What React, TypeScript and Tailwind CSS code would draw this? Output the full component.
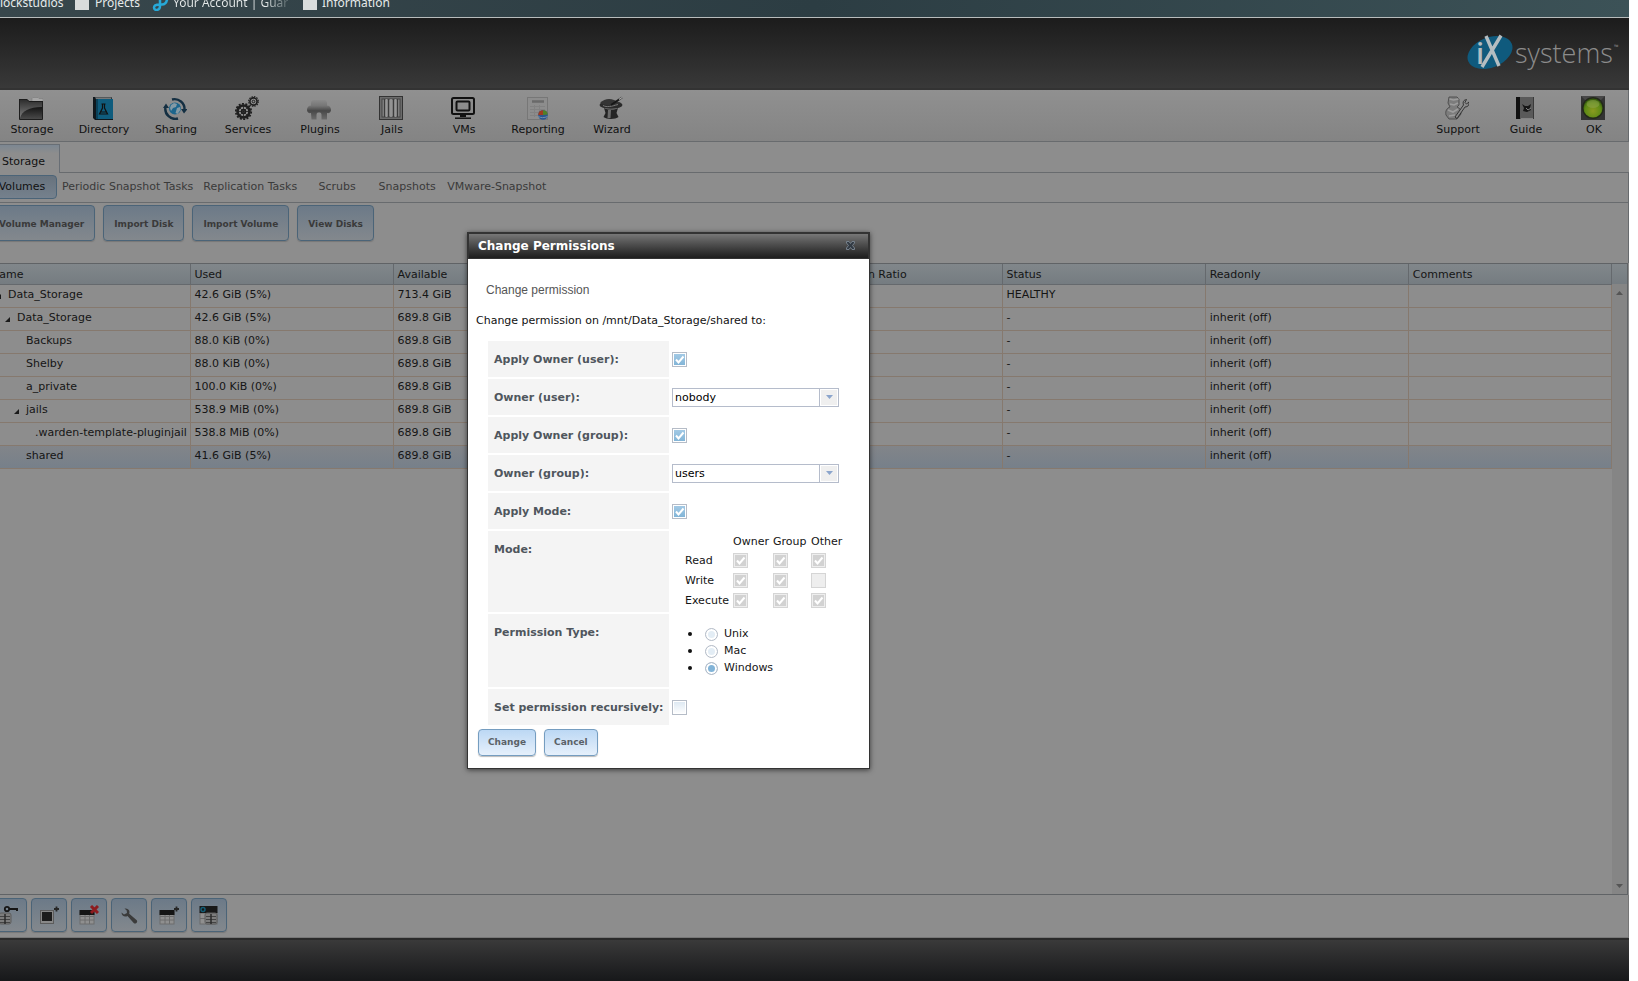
import React from "react";
import clsx from "clsx";

interface Volume {
    name: string;
    depth: number;
    open?: boolean;
    used: string;
    available: string;
    status: string;
    readonly: string;
}

const volumes: Volume[] = [
    { name: "Data_Storage", depth: 0, open: true, used: "42.6 GiB (5%)", available: "713.4 GiB", status: "HEALTHY", readonly: "" },
    { name: "Data_Storage", depth: 1, open: true, used: "42.6 GiB (5%)", available: "689.8 GiB", status: "-", readonly: "inherit (off)" },
    { name: "Backups", depth: 2, used: "88.0 KiB (0%)", available: "689.8 GiB", status: "-", readonly: "inherit (off)" },
    { name: "Shelby", depth: 2, used: "88.0 KiB (0%)", available: "689.8 GiB", status: "-", readonly: "inherit (off)" },
    { name: "a_private", depth: 2, used: "100.0 KiB (0%)", available: "689.8 GiB", status: "-", readonly: "inherit (off)" },
    { name: "jails", depth: 2, open: true, used: "538.9 MiB (0%)", available: "689.8 GiB", status: "-", readonly: "inherit (off)" },
    { name: ".warden-template-pluginjail", depth: 3, used: "538.8 MiB (0%)", available: "689.8 GiB", status: "-", readonly: "inherit (off)" },
    { name: "shared", depth: 2, used: "41.6 GiB (5%)", available: "689.8 GiB", status: "-", readonly: "inherit (off)" },
];

const indents = ["pl-[13px]", "pl-[22px]", "pl-[31px]", "pl-10"];

function StorageIcon() {
    return (
        <svg width="24" height="24" viewBox="0 0 24 24">
            <defs>
                <linearGradient id="folder" x1="0" y1="0" x2="0" y2="1">
                    <stop offset="0" stopColor="#2a2a2a" />
                    <stop offset="1" stopColor="#868686" />
                </linearGradient>
                <linearGradient id="flap" x1="0" y1="0" x2="0" y2="1">
                    <stop offset="0" stopColor="#151515" />
                    <stop offset="1" stopColor="#4a4a4a" />
                </linearGradient>
            </defs>
            <path d="M13 5V2.500l1-1h5l1 1h4V8H13z" fill="#a5a5a5" stroke="#7c7c7c" strokeWidth=".6" />
            <path d="M0 3h8l2 2h14v19H0z" fill="url(#folder)" />
            <path d="M1 22C3 15 10 11 23 11v12H1z" fill="url(#flap)" />
            <path d="M0 3.500h8l2 2h14" fill="none" stroke="#1c1c1c" />
            <path d="M.5 4v19.500h23V6" fill="none" stroke="#1e1e1e" />
        </svg>
    );
}

function DirectoryIcon() {
    return (
        <svg width="24" height="24" viewBox="0 0 24 24">
            <path d="M2 1h19v2H5v19h17v2H4L2 22z" fill="#10181d" />
            <path d="M4 1.500h17l-1 1.200H5z" fill="#999" />
            <rect x="5" y="3" width="17" height="20" fill="#0f5c7d" />
            <rect x="5" y="3" width="2" height="20" fill="#0a4159" />
            <path d="M10.500 8h4M11.500 8v4L8.500 18h8L13.500 12V8M10 16h5" fill="none" stroke="#101010" strokeWidth="1.200" />
        </svg>
    );
}

function SharingIcon() {
    return (
        <svg width="24" height="24" viewBox="0 0 24 24">
            <g fill="none" stroke="#142f42" strokeWidth="2.400">
                <path d="M9 3.500A10 10 0 0 1 21.500 14" />
                <path d="M15 22.500A10 10 0 0 1 2.500 11" />
            </g>
            <path d="M18 13h6.500l-3.500 4.500zM0 12l3-4.500L6 12z" fill="#142f42" />
            <circle cx="12" cy="12.500" r="6" fill="#1c658c" />
            <path d="M8 9l3-2 3 1-1 3-3 1-2 3-1-3zM14 12l3-1 .5 3-3 4-2-1z" fill="#849aa5" />
        </svg>
    );
}

function GearsIcon() {
    return (
        <svg width="24" height="24" viewBox="0 0 24 24">
            <g fill="none" stroke="#1f1f1f">
                <circle cx="8.500" cy="15.500" r="6" strokeWidth="2.600" />
                <circle cx="8.500" cy="15.500" r="7.700" strokeWidth="1.800" strokeDasharray="2 1.450" />
                <circle cx="8.500" cy="15.500" r="2" strokeWidth="1.400" />
                <path d="M8.500 10v11M3 15.500h11M4.700 11.700l7.600 7.600M12.300 11.700l-7.600 7.600" strokeWidth=".8" />
                <circle cx="18.500" cy="5.500" r="3.600" strokeWidth="1.600" />
                <circle cx="18.500" cy="5.500" r="4.800" strokeWidth="1.200" strokeDasharray="1.500 1" />
                <circle cx="18.500" cy="5.500" r="1.300" strokeWidth="1" />
            </g>
        </svg>
    );
}

function PluginIcon() {
    return (
        <svg width="24" height="24" viewBox="0 0 24 24">
            <defs>
                <linearGradient id="plug" x1="0" y1="0" x2="0" y2="1">
                    <stop offset="0" stopColor="#8a8a8a" />
                    <stop offset=".3" stopColor="#767676" />
                    <stop offset=".55" stopColor="#484848" />
                    <stop offset="1" stopColor="#6b6b6b" />
                </linearGradient>
            </defs>
            <path
                d="M7 4h10c2.500 0 3.500 2 3 5.500 2.500 0 4 2 4 4.500s-2 3.500-4 3L20 23.500h-5.500V19c0-2-1-2.500-2.500-2.500S9.500 17 9.500 19v4.500H4.500L4 17c-2 .5-4-.5-4-3s1.500-4.500 4-4.500C3.500 6 4.500 4 7 4z"
                fill="url(#plug)"
            />
        </svg>
    );
}

function JailsIcon() {
    return (
        <svg width="24" height="24" viewBox="0 0 24 24">
            <rect x=".5" y=".5" width="23" height="23" fill="#6b6b6b" stroke="#333" />
            <rect x="3" y="3" width="18" height="18" fill="#858585" stroke="#444" />
            <path d="M5.500 3v18M9.500 3v18M14.500 3v18M18.500 3v18" stroke="#3c3c3c" strokeWidth="1.200" />
            <path d="M7.500 3v18M12 3v18M16.500 3v18" stroke="#979797" strokeWidth="1.600" />
        </svg>
    );
}

function VmIcon() {
    return (
        <svg width="24" height="24" viewBox="0 0 24 24" fill="none" stroke="#111">
            <rect x="1" y="2" width="22" height="16" rx="1.500" strokeWidth="2" />
            <rect x="5.500" y="5.500" width="13" height="9" rx="1" strokeWidth="2" />
            <path d="M9 20h6" strokeWidth="2" />
            <path d="M4 22.200h16" strokeWidth="1.500" />
        </svg>
    );
}

function ReportIcon() {
    return (
        <svg width="24" height="24" viewBox="0 0 24 24">
            <rect x="2.500" y="1.500" width="20" height="22" fill="#8d8d8d" stroke="#777" />
            <path d="M7 5.500h12" stroke="#6a6a6a" strokeWidth="2.500" />
            <path d="M5 10.500h15M5 13.500h15M5 16.500h15M5 19.500h15M9.500 9v12M14.500 9v12" stroke="#828282" />
            <circle cx="18" cy="19" r="4.800" fill="#2c568d" />
            <path d="M18 19v-4.800A4.800 4.800 0 0 0 13.200 19z" fill="#a03a20" />
            <path d="M18 19v-4.800a4.800 4.800 0 0 1 4.800 4.300z" fill="#528026" />
            <path d="M13.500 20.500c2 1.500 6 1.500 9 0" stroke="#6f8cae" fill="none" />
        </svg>
    );
}

function WizardIcon() {
    return (
        <svg width="24" height="24" viewBox="0 0 24 24">
            <path d="M5 12c4 2 11 2 14 0l-1.500 5 2 4c-3 2.500-12 2.500-15 0l2-4z" fill="#242424" />
            <path d="M9 14l-.5 8h3L12 14z" fill="#6b6b6b" />
            <ellipse cx="12" cy="9" rx="11.500" ry="3.800" fill="#2b2b2b" />
            <path d="M1 7c4-4 9-5 14-3l7 3c-5 3-13 4-21 0z" fill="#343434" />
            <path d="M4 9.500c4 2 8 1 15-1" stroke="#777" fill="none" />
            <path d="M12 9L23 1.500" stroke="#171717" strokeWidth="2" />
            <path d="M20 3.500l3-2" stroke="#aaa" strokeWidth="1.400" />
        </svg>
    );
}

function SupportIcon() {
    return (
        <svg width="24" height="24" viewBox="0 0 24 24">
            <path d="M4 1h8l2 2v6l-2 2c3 1 4 3 4 7l-4 5H4l-3-4c-1-4 1-7 4-8L3 7z" fill="#7c7c7c" stroke="#505050" />
            <path d="M4.500 3l4 1 5-1M5 8l4 1 4-2M3 14l5 2 5-3M4 20l6-1" stroke="#9d9d9d" strokeWidth="1.600" fill="none" />
            <path d="M10 21l8.500-12c-1-3 0-5 3-5.500l-1.500 3 1.500 1.500 2.500-2c.5 3-1 5-4 5L12 22.500z" fill="#8a8a8a" stroke="#222" strokeWidth=".8" />
        </svg>
    );
}

function GuideIcon() {
    return (
        <svg width="24" height="24" viewBox="0 0 24 24">
            <path d="M3 1h18v22H3z" fill="#5a5a5a" />
            <path d="M3 1h4v22H3z" fill="#111" />
            <path d="M20.500 1v22" stroke="#3a3a3a" />
            <path d="M8 22.500h12" stroke="#838383" />
            <path d="M9 8l3 2h3l3-2-1 4 1 2-4 2-4-1 1-3z" fill="#161616" />
            <path d="M13 12l2 2 3-2" stroke="#818181" fill="none" />
        </svg>
    );
}

function AlertIcon() {
    return (
        <svg width="24" height="24" viewBox="0 0 24 24">
            <defs>
                <radialGradient id="lamp" cx=".5" cy=".65" r=".6">
                    <stop offset="0" stopColor="#8a9a20" />
                    <stop offset=".7" stopColor="#5e8a16" />
                    <stop offset="1" stopColor="#375e0c" />
                </radialGradient>
            </defs>
            <rect width="24" height="24" fill="#333" />
            <path d="M0 0h24L12 12z" fill="#484848" />
            <circle cx="12" cy="12" r="11" fill="#23291a" />
            <circle cx="12" cy="12" r="9.500" fill="url(#lamp)" />
            <ellipse cx="12" cy="8" rx="6.500" ry="4" fill="#91a750" opacity=".5" />
        </svg>
    );
}

const menu = [
    { label: "Storage", icon: <StorageIcon /> },
    { label: "Directory", icon: <DirectoryIcon /> },
    { label: "Sharing", icon: <SharingIcon /> },
    { label: "Services", icon: <GearsIcon /> },
    { label: "Plugins", icon: <PluginIcon /> },
    { label: "Jails", icon: <JailsIcon /> },
    { label: "VMs", icon: <VmIcon /> },
    { label: "Reporting", icon: <ReportIcon /> },
    { label: "Wizard", icon: <WizardIcon /> },
];

const menuRight = [
    { label: "Support", icon: <SupportIcon /> },
    { label: "Guide", icon: <GuideIcon /> },
    { label: "OK", icon: <AlertIcon /> },
];

function MenuButton({ label, icon, className }: { label: string; icon: React.ReactNode; className: string }) {
    return (
        <button className={clsx("flex flex-col items-center gap-[3px] pt-1.5 cursor-pointer", className)}>
            <span className="pr-0.5">{icon}</span>
            <span className="leading-[14px]">{label}</span>
        </button>
    );
}

function Logo() {
    return (
        <svg width="156" height="40" viewBox="0 0 156 40" aria-label="iXsystems">
            <ellipse cx="25" cy="19.500" rx="23.500" ry="15" transform="rotate(-22 25 19.500)" fill="#0f5a7d" />
            <text x="11" y="31" fill="#b4bdc1" fontFamily="Open Sans" fontSize="29" fontWeight="600">i</text>
            <path d="M21 3l13 30M36 2.500L17 34" stroke="#b4bdc1" strokeWidth="3.400" fill="none" />
            <text x="50" y="30" fill="#8c8c8c" fontFamily="Open Sans" fontSize="27" fontWeight="300">systems</text>
            <text x="149" y="16" fill="#8c8c8c" fontFamily="Open Sans" fontSize="6">™</text>
        </svg>
    );
}

function Bookmarks() {
    return (
        <div className="h-[17px] overflow-hidden bg-linear-to-r from-[#38474c] via-[#2c3d43] to-[#3c5257] font-['Noto_Sans'] text-xs leading-4 text-[#e6eaea]">
            <div className="-mt-[5px] flex items-center whitespace-nowrap">
                <a href="#" className="-ml-1 w-[79px] overflow-hidden pl-1">lockstudios</a>
                <a href="#" className="flex w-[77px] items-center gap-1.5">
                    <span className="h-3.5 w-3.5 bg-[#d9dcdc]" />
                    Projects
                </a>
                <a href="#" className="flex w-[151px] items-center gap-1">
                    <svg width="17" height="16" viewBox="0 0 17 16">
                        <path d="M8 0v11c0 5-6 5-6 1.500C2 10 4 9.500 8 9.500h2c4 0 5.500-3 5.500-9.500" fill="none" stroke="#27a9d8" strokeWidth="2.500" />
                    </svg>
                    <span className="bg-linear-to-r from-[#e6eaea] from-80% to-[#59676b] bg-clip-text text-transparent">Your Account | Guar</span>
                </a>
                <a href="#" className="flex items-center gap-[5px]">
                    <span className="h-3.5 w-3.5 bg-[#d9dcdc]" />
                    Information
                </a>
            </div>
        </div>
    );
}

function DimButton({ children }: { children: React.ReactNode }) {
    return (
        <button className="h-9 rounded border border-[#4b6478] bg-linear-to-b from-[#6c7a88] to-[#83888d] px-2.5 pt-[3px] text-[9px] font-bold text-[#3a3a3a] shadow-[0_1px_1px_#777] cursor-pointer">
            {children}
        </button>
    );
}

function DiskStack({ x, y }: { x: number; y: number }) {
    return (
        <g transform={`translate(${x} ${y})`}>
            <rect width="12" height="11" rx="2" fill="#7c7c7c" stroke="#5d5d5d" />
            <path d="M1 3.500h10M1 6.500h10M1 9.500h10" stroke="#444" />
            <path d="M6 1v10" stroke="#2a2a2a" strokeWidth="1.500" />
        </g>
    );
}

function TableGlyph() {
    return (
        <g>
            <rect x="0" y="6" width="14" height="12" fill="#8f8f8f" stroke="#6c6c6c" />
            <path d="M0 10.500h14M0 14h14M5 6v12M9.500 6v12" stroke="#6c6c6c" />
            <rect x="-.5" y="4" width="15" height="5" fill="#151515" />
        </g>
    );
}

const plus = <path d="M14 3h5M16.500 .5v5" stroke="#262626" strokeWidth="1.800" />;

const actions = [
    {
        label: "Create encryption key",
        icon: (
            <g>
                <DiskStack x={-1} y={7} />
                <circle cx="7" cy="3" r="2.200" fill="none" stroke="#151515" strokeWidth="1.800" />
                <path d="M9 3h8v2" stroke="#151515" strokeWidth="2" fill="none" />
            </g>
        ),
    },
    {
        label: "Create dataset",
        icon: (
            <g>
                <rect x=".5" y="4.500" width="13" height="13" fill="#888" stroke="#5c5c5c" />
                <rect x="2" y="6" width="10" height="9" fill="#1d1d1d" />
                {plus}
            </g>
        ),
    },
    {
        label: "Destroy dataset",
        icon: (
            <g>
                <TableGlyph />
                <path d="M11 0l7 7M18 0l-7 7" stroke="#8d1c1f" strokeWidth="3" />
            </g>
        ),
    },
    {
        label: "Change permissions",
        icon: (
            <path
                d="M4.500 2.500c2.500-.5 5 1 5 3.500l-.3 1.800 7.300 6.200c2 1.800-.8 4.800-2.800 3L7.500 10C5 11.500 1.500 10 1.500 6.500L4 8.500l3-1.500-.3-2.500z"
                fill="#3b3b3b"
            />
        ),
    },
    {
        label: "Create zvol",
        icon: (
            <g>
                <TableGlyph />
                {plus}
            </g>
        ),
    },
    {
        label: "Create snapshot",
        icon: (
            <g>
                <rect x="0" y="7" width="17" height="11" fill="#8f8f8f" stroke="#6a6a6a" />
                <path d="M0 12.500h17" stroke="#6a6a6a" />
                <rect x="-.5" y="0" width="18" height="7" fill="#181818" />
                <circle cx="3" cy="3.500" r="2" fill="none" stroke="#135c75" strokeWidth="1.500" />
                <DiskStack x={5} y={7} />
            </g>
        ),
    },
];

function VolumeTable() {
    const head = ["Name", "Used", "Available", "Compression", "Compression Ratio", "Status", "Readonly", "Comments"];
    return (
        <table className="w-full table-fixed border-collapse text-left leading-[14px] whitespace-nowrap text-[#151515]">
            <colgroup>
                <col className="w-[203px]" />
                <col className="w-[203px]" />
                <col className="w-[203px]" />
                <col className="w-[203px]" />
                <col className="w-[203px]" />
                <col />
                <col />
                <col />
            </colgroup>
            <thead>
                <tr className="h-5 bg-linear-to-b from-[#81878b] to-[#757c81]">
                    {head.map((h) => (
                        <th key={h} className="border-r border-b border-[#65696d] px-1 pt-0.5 font-normal">{h}</th>
                    ))}
                </tr>
            </thead>
            <tbody>
                {volumes.map((v, i) => (
                    <tr key={i} className={clsx("h-[23px]", v.name === "shared" && "bg-linear-to-b from-[#828589] to-[#77808a]")}>
                        <td className="border-r border-b border-[#86796e] p-0">
                            <div className={clsx("flex items-center pb-0.5", indents[v.depth])}>
                                <span className="-ml-1 flex w-3 shrink-0 items-center">
                                    {v.open && (
                                        <svg width="5" height="5" viewBox="0 0 5 5" className="mt-1">
                                            <path d="M5 0v5H0z" fill="#1a1a1a" />
                                        </svg>
                                    )}
                                </span>
                                {v.name}
                            </div>
                        </td>
                        {[v.used, v.available, "", "", v.status, v.readonly, ""].map((c, j) => (
                            <td key={j} className="border-r border-b border-[#86796e] px-1 pb-0.5">{c}</td>
                        ))}
                    </tr>
                ))}
            </tbody>
        </table>
    );
}

function Check({ id, label, checked, disabled }: { id?: string; label?: string; checked?: boolean; disabled?: boolean }) {
    return (
        <span className="relative block h-[15px] w-[15px]">
            <input
                id={id}
                type="checkbox"
                aria-label={label}
                defaultChecked={checked}
                disabled={disabled}
                className="peer block h-[15px] w-[15px] appearance-none border border-[#b5bcc7] bg-linear-to-b from-[#dbe7f1] to-white shadow-[inset_0_0_0_1px_white] checked:from-[#a5cbe6] checked:to-[#7fb3d6] disabled:border-[#d5d5d5] disabled:bg-none disabled:bg-[#eeeeee] disabled:shadow-[inset_0_0_0_1px_#eee] disabled:checked:bg-[#d2d2d2]"
            />
            <svg viewBox="0 0 15 15" className="pointer-events-none absolute inset-0 hidden peer-checked:block">
                <path d="M4 7.500l2.500 3 5-6" fill="none" stroke="#fff" strokeWidth="2" />
            </svg>
        </span>
    );
}

function Combo({ id, value, options }: { id: string; value: string; options: string[] }) {
    return (
        <div className="relative h-[19px] w-[167px]">
            <select id={id} defaultValue={value} className="h-full w-full appearance-none border border-[#b5bccb] bg-white pt-px pl-0.5 text-black">
                {options.map((o) => (
                    <option key={o}>{o}</option>
                ))}
            </select>
            <span className="pointer-events-none absolute inset-y-0 right-0 flex w-5 items-center justify-center border border-[#b5bccb] bg-[#efefef] shadow-[inset_0_0_0_1px_white]">
                <svg width="7" height="4" viewBox="0 0 7 4">
                    <path d="M0 0h7L3.500 4z" fill="#8ba5cc" />
                </svg>
            </span>
        </div>
    );
}

function FormRow({ label, htmlFor, height, children }: { label: string; htmlFor?: string; height: string; children: React.ReactNode }) {
    return (
        <div className={clsx("grid grid-cols-[181px_1fr] gap-[3px]", height)}>
            <div className="bg-[#f4f4f4] pt-3 pl-1.5 font-bold leading-[14px] whitespace-nowrap text-[#4f565d]">
                {htmlFor ? <label htmlFor={htmlFor}>{label}</label> : label}
            </div>
            {children}
        </div>
    );
}

const modes = [
    { label: "Read", bits: [true, true, true] },
    { label: "Write", bits: [true, true, false] },
    { label: "Execute", bits: [true, true, true] },
];

function DialogButton({ children }: { children: React.ReactNode }) {
    return (
        <button type="button" className="h-[27px] rounded border border-[#759dc0] bg-linear-to-b from-[#bcd8f4] to-[#e6f0fb] px-[9px] text-[9px] font-bold text-[#5b6167] shadow-[0_1px_1px_#bbb] cursor-pointer">
            {children}
        </button>
    );
}

function PermissionsDialog() {
    const who = ["Owner", "Group", "Other"];
    return (
        <div role="dialog" aria-labelledby="dlg-title" className="absolute top-[232px] left-[467px] w-[403px] border border-[#333] bg-white pb-3 shadow-[0_1px_5px_rgba(0,0,0,0.6)]">
            <div className="flex h-[26px] items-center justify-between border border-[#333] bg-linear-to-b from-[#777] to-[#1e1e1e] pr-3 pl-[9px]">
                <h2 id="dlg-title" className="text-xs font-bold text-white">Change Permissions</h2>
                <button aria-label="Close" className="mb-0.5 cursor-pointer">
                    <svg width="11" height="11" viewBox="0 0 11 11">
                        <path d="M1.500 1.500h2.500l1.500 2 1.500-2h2.500v1.500L7.500 5.500l2 2.500v1.500H7l-1.500-2-1.500 2H1.500V8l2-2.500-2-2.500z" fill="#333b44" stroke="#76818c" />
                    </svg>
                </button>
            </div>
            <form className="pl-2" onSubmit={(e) => e.preventDefault()}>
                <p className="pt-[23px] pl-2.5 font-['Liberation_Sans'] text-xs leading-4 text-[#555]">Change permission</p>
                <p className="mt-4 leading-[14px] text-[#111]">Change permission on /mnt/Data_Storage/shared to:</p>
                <div className="mt-[13px] ml-3 flex flex-col gap-0.5 text-[#151515]">
                    <FormRow label="Apply Owner (user):" htmlFor="apply-user" height="h-9">
                        <div className="flex items-center"><Check id="apply-user" checked /></div>
                    </FormRow>
                    <FormRow label="Owner (user):" htmlFor="owner-user" height="h-9">
                        <div className="flex items-center"><Combo id="owner-user" value="nobody" options={["nobody", "root"]} /></div>
                    </FormRow>
                    <FormRow label="Apply Owner (group):" htmlFor="apply-group" height="h-9">
                        <div className="flex items-center"><Check id="apply-group" checked /></div>
                    </FormRow>
                    <FormRow label="Owner (group):" htmlFor="owner-group" height="h-9">
                        <div className="flex items-center"><Combo id="owner-group" value="users" options={["users", "wheel"]} /></div>
                    </FormRow>
                    <FormRow label="Apply Mode:" htmlFor="apply-mode" height="h-9">
                        <div className="flex items-center"><Check id="apply-mode" checked /></div>
                    </FormRow>
                    <FormRow label="Mode:" height="h-[81px]">
                        <div className="pl-[13px]">
                            <table className="text-left leading-[14px]">
                                <thead>
                                    <tr className="h-[19px]">
                                        <td className="w-12" />
                                        <th className="w-10 pt-[3px] font-normal">Owner</th>
                                        <th className="w-[38px] pt-[3px] font-normal">Group</th>
                                        <th className="pt-[3px] font-normal">Other</th>
                                    </tr>
                                </thead>
                                <tbody>
                                    {modes.map((m) => (
                                        <tr key={m.label} className="h-5">
                                            <th className="pt-px font-normal">{m.label}</th>
                                            {m.bits.map((b, i) => (
                                                <td key={i}><Check label={`${who[i]} ${m.label}`} checked={b} disabled /></td>
                                            ))}
                                        </tr>
                                    ))}
                                </tbody>
                            </table>
                        </div>
                    </FormRow>
                    <FormRow label="Permission Type:" height="h-[73px]">
                        <ul className="pt-[11px] pl-4">
                            {["Unix", "Mac", "Windows"].map((t) => (
                                <li key={t} className="flex h-[17px] items-center gap-[13px]">
                                    <span className="h-1 w-1 rounded-full bg-[#111]" />
                                    <label className="flex items-center gap-1.5 leading-[17px]">
                                        <input
                                            type="radio"
                                            name="ptype"
                                            defaultChecked={t === "Windows"}
                                            className="mt-px h-[13px] w-[13px] appearance-none rounded-full border border-[#b5bcc7] bg-[#e3edf5] shadow-[inset_0_0_0_2px_white] checked:bg-[#82b4d8]"
                                        />
                                        {t}
                                    </label>
                                </li>
                            ))}
                        </ul>
                    </FormRow>
                    <FormRow label="Set permission recursively:" htmlFor="recursive" height="h-9">
                        <div className="flex items-center"><Check id="recursive" /></div>
                    </FormRow>
                </div>
                <div className="mt-1 ml-0.5 flex gap-2">
                    <DialogButton>Change</DialogButton>
                    <DialogButton>Cancel</DialogButton>
                </div>
            </form>
        </div>
    );
}

export default function App() {
    const tabs = ["Volumes", "Periodic Snapshot Tasks", "Replication Tasks", "Scrubs", "Snapshots", "VMware-Snapshot"];
    return (
        <div className="relative min-h-screen overflow-hidden bg-white pr-[9px] font-['DejaVu_Sans',sans-serif] text-[11px]">
            <div className="flex min-h-screen flex-col overflow-hidden bg-[#8d8d8d]">
                <Bookmarks />
                <header className="flex h-[73px] items-center justify-end border-t border-b-2 border-t-[#b8bcbc] border-b-[#333] bg-linear-to-b from-[#1c1c1c] to-[#393939] pr-2">
                    <Logo />
                </header>

                <div className="-ml-4 flex grow flex-col">
                    <nav className="flex h-[52px] justify-between border-r border-b border-[#686b6e] bg-linear-to-b from-[#909090] to-[#848484] pl-3 text-[#111]">
                        <div className="flex">
                            {menu.map((m) => (
                                <MenuButton key={m.label} {...m} className={m.label === "Reporting" ? "w-[76px]" : "w-[72px]"} />
                            ))}
                        </div>
                        <div className="flex">
                            {menuRight.map((m) => (
                                <MenuButton key={m.label} {...m} className="w-[68px]" />
                            ))}
                        </div>
                    </nav>

                    <div className="flex h-[31px] border-b border-[#686b6e] pt-0.5">
                        <button className="-mb-px w-[76px] border-t border-r border-[#686e75] bg-linear-to-b from-[#7c8792] to-[#8d8d8d] to-30% pt-1.5 pl-[18px] text-left text-[#111]">
                            Storage
                        </button>
                    </div>

                    <div className="flex h-[30px] border-r border-b border-[#686b6e] pt-0.5 pl-[3px]">
                        {tabs.map((t, i) => (
                            <button
                                key={t}
                                className={clsx(
                                    "h-6 min-w-[70px] px-[5px] cursor-pointer",
                                    i === 0 ? "rounded-sm border border-[#4b6478] bg-linear-to-b from-[#67727d] to-[#75818d] text-[#111]" : "text-[#3a3a3a]"
                                )}
                            >
                                {t}
                            </button>
                        ))}
                    </div>

                    <div className="flex h-[60px] gap-2 border-r border-[#686b6e] pt-[2px] pl-1">
                        <DimButton>Volume Manager</DimButton>
                        <DimButton>Import Disk</DimButton>
                        <DimButton>Import Volume</DimButton>
                        <DimButton>View Disks</DimButton>
                    </div>

                    <div className="mr-px flex grow border-t border-r border-b border-[#606366] pl-[3px]">
                        <div className="grow">
                            <VolumeTable />
                        </div>
                        <div className="flex w-[15px] shrink-0 flex-col items-center justify-between bg-[#858585]">
                            <div className="flex w-full flex-col items-center gap-[7px]">
                                <div className="h-5 w-full bg-linear-to-b from-[#81878b] to-[#757c81]" />
                                <svg width="7" height="4" viewBox="0 0 7 4"><path d="M0 4h7L3.500 0z" fill="#555" /></svg>
                            </div>
                            <svg width="7" height="4" viewBox="0 0 7 4" className="mb-1.5"><path d="M0 0h7L3.500 4z" fill="#555" /></svg>
                        </div>
                    </div>

                    <div className="flex h-[43px] gap-1 border-r border-b border-[#777] pt-[3px] pl-[7px]">
                        {actions.map((a) => (
                            <button key={a.label} aria-label={a.label} className="flex h-[34px] w-9 items-center justify-center rounded border border-[#4b6478] bg-linear-to-b from-[#6c7a88] to-[#83888d] shadow-[0_1px_1px_#777] cursor-pointer">
                                <svg width="20" height="20" viewBox="-1 -1 20 20">{a.icon}</svg>
                            </button>
                        ))}
                    </div>
                </div>

                <footer className="h-[43px] border-t-2 border-[#2a2a2a] bg-linear-to-b from-[#3a3a3a] to-[#17181a]" />
            </div>
            <PermissionsDialog />
        </div>
    );
}
